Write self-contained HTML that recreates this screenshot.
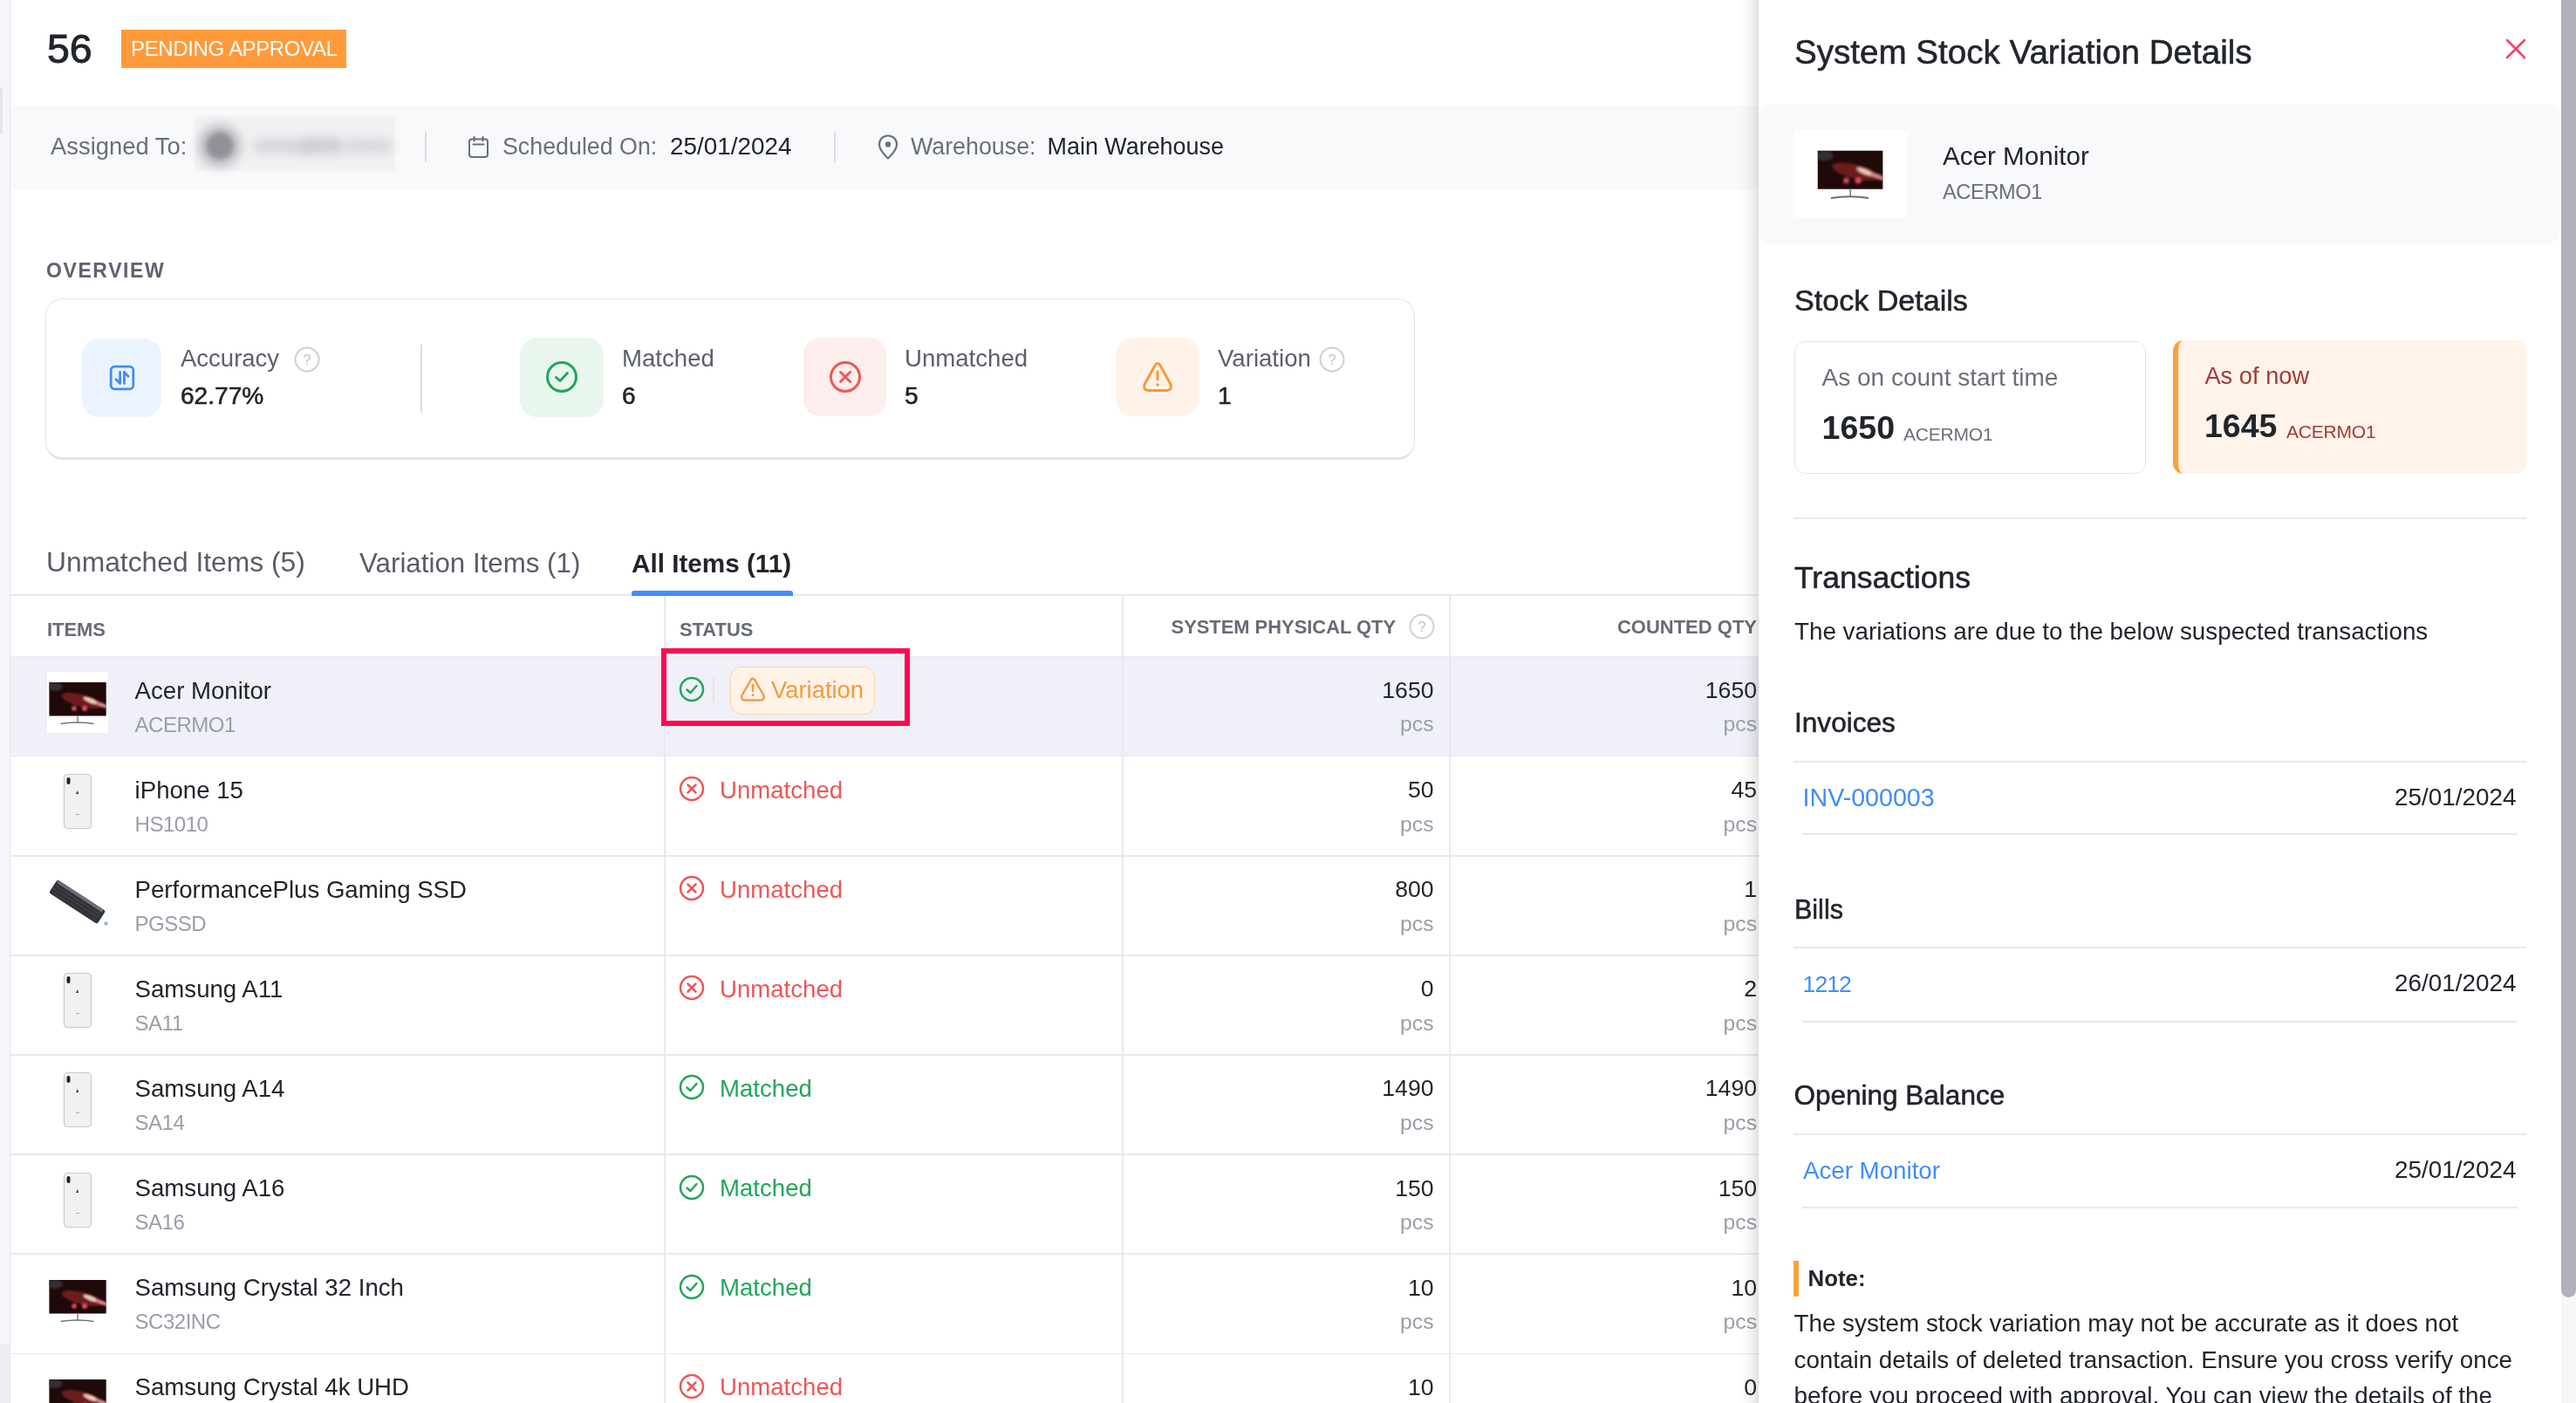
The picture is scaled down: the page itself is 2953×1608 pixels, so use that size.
<!DOCTYPE html>
<html><head><meta charset="utf-8"><title>Stock Count</title>
<style>
html,body{margin:0;padding:0;}
body{width:2953px;height:1608px;overflow:hidden;position:relative;background:#ffffff;font-family:"Liberation Sans",sans-serif;}
.t{position:absolute;line-height:1;white-space:nowrap;}
.b{position:absolute;}
.root{position:absolute;left:0;top:0;width:2953px;height:1608px;will-change:transform;}
</style></head><body>
<div class="root">
<div class="b" style="left:0px;top:0px;width:11px;height:1608px;background:#f5f6fa;"></div>
<div class="b" style="left:0px;top:1541px;width:11px;height:67px;background:#edeef3;"></div>
<div class="b" style="left:11px;top:0px;width:1px;height:1608px;background:#e4e5eb;"></div>
<div class="b" style="left:0px;top:100px;width:3px;height:54px;background:#e4e5ea;border-radius:0 3px 3px 0;"></div>
<div class="t" style="top:32.6px;font-size:46.5px;color:#21252b;left:54px;-webkit-text-stroke:0.9px currentColor;">56</div>
<div class="b" style="left:139px;top:34px;width:258px;height:44px;background:#ff9a3c;"></div>
<div class="t" style="top:44.0px;font-size:24px;color:#ffffff;letter-spacing:-0.35px;left:150px;">PENDING APPROVAL</div>
<div class="b" style="left:12px;top:121px;width:2004px;height:96px;background:#f8f9fb;"></div>
<div class="t" style="top:154.3px;font-size:27.4px;color:#6b6f7a;left:58px;">Assigned To:</div>
<div class="b" style="left:223px;top:133px;width:230px;height:63px;background:#f1f1f3;filter:blur(1.5px);"></div>
<div class="b" style="left:226px;top:141px;width:52px;height:52px;border-radius:50%;background:#c9cacf;filter:blur(5px);"></div>
<div class="b" style="left:236px;top:151px;width:32px;height:32px;border-radius:50%;background:#8f9098;filter:blur(3px);"></div>
<div class="b" style="left:290px;top:160px;width:70px;height:15px;border-radius:8px;background:#d3d4d8;filter:blur(6px);"></div>
<div class="b" style="left:345px;top:158px;width:50px;height:18px;border-radius:9px;background:#cdced2;filter:blur(6px);"></div>
<div class="b" style="left:395px;top:160px;width:55px;height:15px;border-radius:8px;background:#d6d7db;filter:blur(6px);"></div>
<div class="b" style="left:487px;top:151px;width:2px;height:35px;background:#dcdde2;"></div>
<svg class="b" style="left:535px;top:155px" width="28" height="28" viewBox="0 0 28 28"><rect x="3" y="4.5" width="21" height="20.5" rx="3" fill="none" stroke="#6b6f7a" stroke-width="2"/><line x1="8.5" y1="2" x2="8.5" y2="6.5" stroke="#6b6f7a" stroke-width="2" stroke-linecap="round"/><line x1="18.5" y1="2" x2="18.5" y2="6.5" stroke="#6b6f7a" stroke-width="2" stroke-linecap="round"/><line x1="7.5" y1="10.5" x2="19.5" y2="10.5" stroke="#6b6f7a" stroke-width="2" stroke-linecap="round"/></svg>
<div class="t" style="top:154.8px;font-size:26.8px;color:#6b6f7a;left:576px;">Scheduled On:</div>
<div class="t" style="top:153.9px;font-size:27.9px;color:#21252b;left:768px;">25/01/2024</div>
<div class="b" style="left:956px;top:151px;width:2px;height:35px;background:#dcdde2;"></div>
<svg class="b" style="left:1004px;top:154px" width="28" height="30" viewBox="0 0 28 30"><path d="M14 27.5 C14 27.5 4 18.5 4 11.5 C4 5.7 8.5 1.5 14 1.5 C19.5 1.5 24 5.7 24 11.5 C24 18.5 14 27.5 14 27.5 Z" fill="none" stroke="#6b6f7a" stroke-width="2.2" stroke-linejoin="round"/><circle cx="14" cy="11.5" r="3.2" fill="#6b6f7a"/></svg>
<div class="t" style="top:154.8px;font-size:26.8px;color:#6b6f7a;left:1044px;">Warehouse:</div>
<div class="t" style="top:154.7px;font-size:26.9px;color:#21252b;left:1200.6px;">Main Warehouse</div>
<div class="t" style="top:298.5px;font-size:23px;color:#5f636e;font-weight:700;letter-spacing:1.6px;left:53px;">OVERVIEW</div>
<div class="b" style="left:52px;top:342px;width:1570px;height:185px;box-sizing:border-box;border:1.5px solid #e3e4ed;border-bottom:3px solid #e4e3f0;border-radius:20px;background:#fff;"></div>
<div class="b" style="left:94px;top:388px;width:91px;height:90px;background:#ebf3fe;border-radius:20px;"></div>
<svg class="b" style="left:124px;top:417px" width="32" height="32" viewBox="0 0 32 32"><rect x="3.2" y="3.2" width="25.6" height="25.6" rx="4" fill="none" stroke="#3f8cf6" stroke-width="2.8"/><path d="M13.6 9.5 V22.5 M13.6 22.5 L9 17.8" fill="none" stroke="#3f8cf6" stroke-width="2.8" stroke-linecap="round" stroke-linejoin="round"/><path d="M18.4 22.5 V9.5 M18.4 9.5 L23 14.2" fill="none" stroke="#3f8cf6" stroke-width="2.8" stroke-linecap="round" stroke-linejoin="round"/></svg>
<div class="t" style="top:397.4px;font-size:27.5px;color:#5c606b;left:207px;">Accuracy</div>
<svg class="b" style="left:337.0px;top:397.0px" width="30.0" height="30.0" viewBox="0 0 30.0 30.0"><circle cx="15.0" cy="15.0" r="13.5" fill="none" stroke="#cfd0d5" stroke-width="2"/><text x="15.0" y="21.0" text-anchor="middle" font-family="Liberation Sans" font-size="17" fill="#c3c4ca">?</text></svg>
<div class="t" style="top:440.2px;font-size:28.1px;color:#21252b;left:207px;-webkit-text-stroke:0.55px currentColor;">62.77%</div>
<div class="b" style="left:482px;top:395px;width:2px;height:78px;background:#dcdde3;"></div>
<div class="b" style="left:596px;top:387px;width:96px;height:91px;background:#e8f6ee;border-radius:20px;"></div>
<svg class="b" style="left:624px;top:412px" width="40" height="40" viewBox="0 0 40 40"><circle cx="20" cy="20" r="16.5" fill="none" stroke="#22a65b" stroke-width="3"/><path d="M13.5 20.5 L18 24.5 L26.5 15.5" fill="none" stroke="#22a65b" stroke-width="3" stroke-linecap="round" stroke-linejoin="round"/></svg>
<div class="t" style="top:397.3px;font-size:27.6px;color:#5c606b;left:713px;">Matched</div>
<div class="t" style="top:440.2px;font-size:28.1px;color:#21252b;left:713px;-webkit-text-stroke:0.55px currentColor;">6</div>
<div class="b" style="left:921px;top:387px;width:95px;height:90px;background:#fdeded;border-radius:20px;"></div>
<svg class="b" style="left:949px;top:412px" width="40" height="40" viewBox="0 0 40 40"><circle cx="20" cy="20" r="16.5" fill="none" stroke="#ee5757" stroke-width="3"/><path d="M14.5 14.5 L25.5 25.5 M25.5 14.5 L14.5 25.5" fill="none" stroke="#ee5757" stroke-width="3" stroke-linecap="round"/></svg>
<div class="t" style="top:397.3px;font-size:27.6px;color:#5c606b;left:1037px;">Unmatched</div>
<div class="t" style="top:440.2px;font-size:28.1px;color:#21252b;left:1037px;-webkit-text-stroke:0.55px currentColor;">5</div>
<div class="b" style="left:1279px;top:387px;width:96px;height:90px;background:#fff3e9;border-radius:20px;"></div>
<svg class="b" style="left:1307px;top:412px" width="40" height="40" viewBox="0 0 40 40"><path d="M17.2 6.5 Q20 2.5 22.8 6.5 L35 28.5 Q37 34.5 31 35.5 L9 35.5 Q3 34.5 5 28.5 Z" fill="none" stroke="#f7993a" stroke-width="3" stroke-linejoin="round"/><line x1="20" y1="14" x2="20" y2="23" stroke="#f7993a" stroke-width="3" stroke-linecap="round"/><circle cx="20" cy="29" r="1.8" fill="#f7993a"/></svg>
<div class="t" style="top:397.3px;font-size:27.6px;color:#5c606b;left:1396px;">Variation</div>
<svg class="b" style="left:1512.0px;top:397.0px" width="30.0" height="30.0" viewBox="0 0 30.0 30.0"><circle cx="15.0" cy="15.0" r="13.5" fill="none" stroke="#cfd0d5" stroke-width="2"/><text x="15.0" y="21.0" text-anchor="middle" font-family="Liberation Sans" font-size="17" fill="#c3c4ca">?</text></svg>
<div class="t" style="top:440.2px;font-size:28.1px;color:#21252b;left:1396px;-webkit-text-stroke:0.55px currentColor;">1</div>
<div class="t" style="top:629.1px;font-size:31.8px;color:#585c68;left:53px;">Unmatched Items (5)</div>
<div class="t" style="top:629.5px;font-size:31.3px;color:#585c68;left:412px;">Variation Items (1)</div>
<div class="t" style="top:630.9px;font-size:29.7px;color:#21252b;font-weight:700;left:724px;">All Items (11)</div>
<div class="b" style="left:12px;top:681px;width:2004px;height:2px;background:#e7e8f0;"></div>
<div class="b" style="left:724px;top:677px;width:185px;height:6px;background:#408dfb;border-radius:3px 3px 0 0;"></div>
<div class="t" style="top:710.5px;font-size:21.9px;color:#676b76;font-weight:700;left:54px;">ITEMS</div>
<div class="t" style="top:710.5px;font-size:21.9px;color:#676b76;font-weight:700;left:779px;">STATUS</div>
<div class="t" style="top:708.0px;font-size:21.9px;color:#676b76;font-weight:700;right:1353px;">SYSTEM PHYSICAL QTY</div>
<svg class="b" style="left:1615.0px;top:703.0px" width="30.0" height="30.0" viewBox="0 0 30.0 30.0"><circle cx="15.0" cy="15.0" r="13.5" fill="none" stroke="#cfd0d5" stroke-width="2"/><text x="15.0" y="21.0" text-anchor="middle" font-family="Liberation Sans" font-size="17" fill="#c3c4ca">?</text></svg>
<div class="t" style="top:708.4px;font-size:22px;color:#676b76;font-weight:700;right:939px;">COUNTED QTY</div>
<div class="b" style="left:12px;top:752.5px;width:2004px;height:114.0px;background:#eff0f8;"></div>
<div class="b" style="left:12px;top:751.8px;width:2004px;height:1.5px;background:#e8e9f0;"></div>
<div class="b" style="left:12px;top:865.9px;width:2004px;height:1.5px;background:#e8e9f0;"></div>
<div class="b" style="left:12px;top:980.0px;width:2004px;height:1.5px;background:#e8e9f0;"></div>
<div class="b" style="left:12px;top:1094.1px;width:2004px;height:1.5px;background:#e8e9f0;"></div>
<div class="b" style="left:12px;top:1208.2px;width:2004px;height:1.5px;background:#e8e9f0;"></div>
<div class="b" style="left:12px;top:1322.3px;width:2004px;height:1.5px;background:#e8e9f0;"></div>
<div class="b" style="left:12px;top:1436.4px;width:2004px;height:1.5px;background:#e8e9f0;"></div>
<div class="b" style="left:12px;top:1550.5px;width:2004px;height:1.5px;background:#e8e9f0;"></div>
<div class="b" style="left:761px;top:683px;width:1.5px;height:925px;background:#e8e9f0;"></div>
<div class="b" style="left:1286px;top:683px;width:1.5px;height:925px;background:#e8e9f0;"></div>
<div class="b" style="left:1661px;top:683px;width:1.5px;height:925px;background:#e8e9f0;"></div>
<svg class="b" style="left:54px;top:770.0px" width="70" height="70" viewBox="0 0 70 70" preserveAspectRatio="none"><rect width="70" height="70" fill="#ffffff"/><defs><filter id="fm54_770" x="-20%" y="-50%" width="140%" height="200%"><feGaussianBlur stdDeviation="1.3"/></filter><clipPath id="cm54_770"><rect x="2.4" y="12" width="65.3" height="38.5"/></clipPath></defs><rect x="2.4" y="12" width="65.3" height="38.5" fill="#1f0909"/><g clip-path="url(#cm54_770)"><g filter="url(#fm54_770)"><ellipse cx="9" cy="17" rx="9" ry="5" fill="#3a3e47" opacity="0.7"/><ellipse cx="40" cy="33" rx="24" ry="7" transform="rotate(14 40 33)" fill="#7a2222" opacity="0.85"/><ellipse cx="50" cy="33" rx="9" ry="2.6" transform="rotate(22 50 33)" fill="#f3c8b8"/><ellipse cx="63" cy="38" rx="8" ry="2.2" transform="rotate(22 63 38)" fill="#d88c8c"/><circle cx="31" cy="42" r="2.8" fill="#e0506a"/><circle cx="43" cy="42" r="3" fill="#ea4a6a"/></g></g><rect x="34.3" y="50.5" width="1.6" height="8" fill="#8a8c92"/><path d="M15.7 59.5 Q35 56.5 53.4 59.5" fill="none" stroke="#6b6d73" stroke-width="1.6"/></svg>
<div class="t" style="top:777.6px;font-size:27.6px;color:#21252b;left:154.6px;">Acer Monitor</div>
<div class="t" style="top:818.7px;font-size:24px;color:#9a9ea9;letter-spacing:-0.5px;left:154.6px;">ACERMO1</div>
<svg class="b" style="left:778.0px;top:775.0px" width="30" height="30" viewBox="0 0 30 30"><circle cx="15.0" cy="15.0" r="13" fill="none" stroke="#22a65b" stroke-width="2.5"/><path d="M9.5 15.5 L13.5 19.0 L20.5 11.0" fill="none" stroke="#22a65b" stroke-width="2.5" stroke-linecap="round" stroke-linejoin="round"/></svg>
<div class="b" style="left:817px;top:775.0px;width:1.5px;height:30.0px;background:#e6e4e0;"></div>
<div class="b" style="left:837px;top:763.5px;width:166px;height:55px;box-sizing:border-box;border:1.5px solid #fed3a6;border-radius:13px;background:#fff3e8;"></div>
<svg class="b" style="left:847px;top:775.0px" width="32" height="30" viewBox="0 0 32 30"><path d="M13.6 4.5 Q16 1 18.4 4.5 L28.5 22 Q30 27 25 27.5 L7 27.5 Q2 27 3.5 22 Z" fill="none" stroke="#f7993a" stroke-width="2.5" stroke-linejoin="round"/><line x1="16" y1="10" x2="16" y2="17" stroke="#f7993a" stroke-width="2.5" stroke-linecap="round"/><circle cx="16" cy="21.5" r="1.5" fill="#f7993a"/></svg>
<div class="t" style="top:777.3px;font-size:27.4px;color:#f7993a;left:884px;">Variation</div>
<div class="t" style="top:778.0px;font-size:26.6px;color:#21252b;right:1309.5px;">1650</div>
<div class="t" style="top:818.4px;font-size:24.7px;color:#9a9ea9;right:1309.5px;">pcs</div>
<div class="t" style="top:778.0px;font-size:26.6px;color:#21252b;right:939px;">1650</div>
<div class="t" style="top:818.4px;font-size:24.7px;color:#9a9ea9;right:939px;">pcs</div>
<svg class="b" style="left:54px;top:884.1px" width="70" height="70" viewBox="0 0 70 70"><rect x="19.5" y="3.5" width="31" height="62" rx="4" fill="#f1f1f3" stroke="#c9cacd" stroke-width="1.2"/><rect x="22.5" y="7" width="4" height="8" rx="2" fill="#222"/><path d="M35 22 l-2 4 h3 z" fill="#333"/><rect x="33" y="49" width="4" height="1" fill="#aaa"/></svg>
<div class="t" style="top:891.7px;font-size:27.6px;color:#21252b;left:154.6px;">iPhone 15</div>
<div class="t" style="top:932.8px;font-size:24px;color:#9a9ea9;letter-spacing:-0.5px;left:154.6px;">HS1010</div>
<svg class="b" style="left:778.0px;top:889.1px" width="30" height="30" viewBox="0 0 30 30"><circle cx="15.0" cy="15.0" r="13" fill="none" stroke="#ee5757" stroke-width="2.5"/><path d="M10.5 10.5 L19.5 19.5 M19.5 10.5 L10.5 19.5" fill="none" stroke="#ee5757" stroke-width="2.5" stroke-linecap="round"/></svg>
<div class="t" style="top:891.7px;font-size:27.6px;color:#ee5757;left:825px;">Unmatched</div>
<div class="t" style="top:892.1px;font-size:26.6px;color:#21252b;right:1309.5px;">50</div>
<div class="t" style="top:932.5px;font-size:24.7px;color:#9a9ea9;right:1309.5px;">pcs</div>
<div class="t" style="top:892.1px;font-size:26.6px;color:#21252b;right:939px;">45</div>
<div class="t" style="top:932.5px;font-size:24.7px;color:#9a9ea9;right:939px;">pcs</div>
<svg class="b" style="left:54px;top:998.2px" width="70" height="70" viewBox="0 0 70 70"><g transform="rotate(33 34.6 35.6)"><rect x="1.6" y="26.6" width="66" height="18" rx="2.5" fill="#2f3136"/><rect x="3" y="26.8" width="62" height="3.5" rx="1.5" fill="#6b6e76"/><rect x="3" y="33" width="62" height="1.2" fill="#44474d"/><rect x="3" y="37" width="62" height="1.2" fill="#44474d"/><rect x="3" y="41" width="62" height="1.2" fill="#3d4046"/></g><circle cx="67.5" cy="60.5" r="2.2" fill="#8fb0e0"/></svg>
<div class="t" style="top:1005.8px;font-size:27.6px;color:#21252b;left:154.6px;">PerformancePlus Gaming SSD</div>
<div class="t" style="top:1046.9px;font-size:24px;color:#9a9ea9;letter-spacing:-0.5px;left:154.6px;">PGSSD</div>
<svg class="b" style="left:778.0px;top:1003.2px" width="30" height="30" viewBox="0 0 30 30"><circle cx="15.0" cy="15.0" r="13" fill="none" stroke="#ee5757" stroke-width="2.5"/><path d="M10.5 10.5 L19.5 19.5 M19.5 10.5 L10.5 19.5" fill="none" stroke="#ee5757" stroke-width="2.5" stroke-linecap="round"/></svg>
<div class="t" style="top:1005.8px;font-size:27.6px;color:#ee5757;left:825px;">Unmatched</div>
<div class="t" style="top:1006.2px;font-size:26.6px;color:#21252b;right:1309.5px;">800</div>
<div class="t" style="top:1046.6px;font-size:24.7px;color:#9a9ea9;right:1309.5px;">pcs</div>
<div class="t" style="top:1006.2px;font-size:26.6px;color:#21252b;right:939px;">1</div>
<div class="t" style="top:1046.6px;font-size:24.7px;color:#9a9ea9;right:939px;">pcs</div>
<svg class="b" style="left:54px;top:1112.3px" width="70" height="70" viewBox="0 0 70 70"><rect x="19.5" y="3.5" width="31" height="62" rx="4" fill="#f1f1f3" stroke="#c9cacd" stroke-width="1.2"/><rect x="22.5" y="7" width="4" height="8" rx="2" fill="#222"/><path d="M35 22 l-2 4 h3 z" fill="#333"/><rect x="33" y="49" width="4" height="1" fill="#aaa"/></svg>
<div class="t" style="top:1119.9px;font-size:27.6px;color:#21252b;left:154.6px;">Samsung A11</div>
<div class="t" style="top:1161.0px;font-size:24px;color:#9a9ea9;letter-spacing:-0.5px;left:154.6px;">SA11</div>
<svg class="b" style="left:778.0px;top:1117.3px" width="30" height="30" viewBox="0 0 30 30"><circle cx="15.0" cy="15.0" r="13" fill="none" stroke="#ee5757" stroke-width="2.5"/><path d="M10.5 10.5 L19.5 19.5 M19.5 10.5 L10.5 19.5" fill="none" stroke="#ee5757" stroke-width="2.5" stroke-linecap="round"/></svg>
<div class="t" style="top:1119.9px;font-size:27.6px;color:#ee5757;left:825px;">Unmatched</div>
<div class="t" style="top:1120.3px;font-size:26.6px;color:#21252b;right:1309.5px;">0</div>
<div class="t" style="top:1160.7px;font-size:24.7px;color:#9a9ea9;right:1309.5px;">pcs</div>
<div class="t" style="top:1120.3px;font-size:26.6px;color:#21252b;right:939px;">2</div>
<div class="t" style="top:1160.7px;font-size:24.7px;color:#9a9ea9;right:939px;">pcs</div>
<svg class="b" style="left:54px;top:1226.4px" width="70" height="70" viewBox="0 0 70 70"><rect x="19.5" y="3.5" width="31" height="62" rx="4" fill="#f1f1f3" stroke="#c9cacd" stroke-width="1.2"/><rect x="22.5" y="7" width="4" height="8" rx="2" fill="#222"/><path d="M35 22 l-2 4 h3 z" fill="#333"/><rect x="33" y="49" width="4" height="1" fill="#aaa"/></svg>
<div class="t" style="top:1234.0px;font-size:27.6px;color:#21252b;left:154.6px;">Samsung A14</div>
<div class="t" style="top:1275.1px;font-size:24px;color:#9a9ea9;letter-spacing:-0.5px;left:154.6px;">SA14</div>
<svg class="b" style="left:778.0px;top:1231.4px" width="30" height="30" viewBox="0 0 30 30"><circle cx="15.0" cy="15.0" r="13" fill="none" stroke="#22a65b" stroke-width="2.5"/><path d="M9.5 15.5 L13.5 19.0 L20.5 11.0" fill="none" stroke="#22a65b" stroke-width="2.5" stroke-linecap="round" stroke-linejoin="round"/></svg>
<div class="t" style="top:1234.0px;font-size:27.6px;color:#22a65b;left:825px;">Matched</div>
<div class="t" style="top:1234.4px;font-size:26.6px;color:#21252b;right:1309.5px;">1490</div>
<div class="t" style="top:1274.8px;font-size:24.7px;color:#9a9ea9;right:1309.5px;">pcs</div>
<div class="t" style="top:1234.4px;font-size:26.6px;color:#21252b;right:939px;">1490</div>
<div class="t" style="top:1274.8px;font-size:24.7px;color:#9a9ea9;right:939px;">pcs</div>
<svg class="b" style="left:54px;top:1340.5px" width="70" height="70" viewBox="0 0 70 70"><rect x="19.5" y="3.5" width="31" height="62" rx="4" fill="#f1f1f3" stroke="#c9cacd" stroke-width="1.2"/><rect x="22.5" y="7" width="4" height="8" rx="2" fill="#222"/><path d="M35 22 l-2 4 h3 z" fill="#333"/><rect x="33" y="49" width="4" height="1" fill="#aaa"/></svg>
<div class="t" style="top:1348.1px;font-size:27.6px;color:#21252b;left:154.6px;">Samsung A16</div>
<div class="t" style="top:1389.2px;font-size:24px;color:#9a9ea9;letter-spacing:-0.5px;left:154.6px;">SA16</div>
<svg class="b" style="left:778.0px;top:1345.5px" width="30" height="30" viewBox="0 0 30 30"><circle cx="15.0" cy="15.0" r="13" fill="none" stroke="#22a65b" stroke-width="2.5"/><path d="M9.5 15.5 L13.5 19.0 L20.5 11.0" fill="none" stroke="#22a65b" stroke-width="2.5" stroke-linecap="round" stroke-linejoin="round"/></svg>
<div class="t" style="top:1348.1px;font-size:27.6px;color:#22a65b;left:825px;">Matched</div>
<div class="t" style="top:1348.5px;font-size:26.6px;color:#21252b;right:1309.5px;">150</div>
<div class="t" style="top:1388.9px;font-size:24.7px;color:#9a9ea9;right:1309.5px;">pcs</div>
<div class="t" style="top:1348.5px;font-size:26.6px;color:#21252b;right:939px;">150</div>
<div class="t" style="top:1388.9px;font-size:24.7px;color:#9a9ea9;right:939px;">pcs</div>
<svg class="b" style="left:54px;top:1454.6px" width="70" height="70" viewBox="0 0 70 70" preserveAspectRatio="none"><rect width="70" height="70" fill="#ffffff"/><defs><filter id="fm54_1454" x="-20%" y="-50%" width="140%" height="200%"><feGaussianBlur stdDeviation="1.3"/></filter><clipPath id="cm54_1454"><rect x="2.4" y="12" width="65.3" height="38.5"/></clipPath></defs><rect x="2.4" y="12" width="65.3" height="38.5" fill="#1f0909"/><g clip-path="url(#cm54_1454)"><g filter="url(#fm54_1454)"><ellipse cx="9" cy="17" rx="9" ry="5" fill="#3a3e47" opacity="0.7"/><ellipse cx="40" cy="33" rx="24" ry="7" transform="rotate(14 40 33)" fill="#7a2222" opacity="0.85"/><ellipse cx="50" cy="33" rx="9" ry="2.6" transform="rotate(22 50 33)" fill="#f3c8b8"/><ellipse cx="63" cy="38" rx="8" ry="2.2" transform="rotate(22 63 38)" fill="#d88c8c"/><circle cx="31" cy="42" r="2.8" fill="#e0506a"/><circle cx="43" cy="42" r="3" fill="#ea4a6a"/></g></g><rect x="34.3" y="50.5" width="1.6" height="8" fill="#8a8c92"/><path d="M15.7 59.5 Q35 56.5 53.4 59.5" fill="none" stroke="#6b6d73" stroke-width="1.6"/></svg>
<div class="t" style="top:1462.2px;font-size:27.6px;color:#21252b;left:154.6px;">Samsung Crystal 32 Inch</div>
<div class="t" style="top:1503.3px;font-size:24px;color:#9a9ea9;letter-spacing:-0.5px;left:154.6px;">SC32INC</div>
<svg class="b" style="left:778.0px;top:1459.6px" width="30" height="30" viewBox="0 0 30 30"><circle cx="15.0" cy="15.0" r="13" fill="none" stroke="#22a65b" stroke-width="2.5"/><path d="M9.5 15.5 L13.5 19.0 L20.5 11.0" fill="none" stroke="#22a65b" stroke-width="2.5" stroke-linecap="round" stroke-linejoin="round"/></svg>
<div class="t" style="top:1462.2px;font-size:27.6px;color:#22a65b;left:825px;">Matched</div>
<div class="t" style="top:1462.6px;font-size:26.6px;color:#21252b;right:1309.5px;">10</div>
<div class="t" style="top:1503.0px;font-size:24.7px;color:#9a9ea9;right:1309.5px;">pcs</div>
<div class="t" style="top:1462.6px;font-size:26.6px;color:#21252b;right:939px;">10</div>
<div class="t" style="top:1503.0px;font-size:24.7px;color:#9a9ea9;right:939px;">pcs</div>
<svg class="b" style="left:54px;top:1568.7px" width="70" height="70" viewBox="0 0 70 70" preserveAspectRatio="none"><rect width="70" height="70" fill="#ffffff"/><defs><filter id="fm54_1568" x="-20%" y="-50%" width="140%" height="200%"><feGaussianBlur stdDeviation="1.3"/></filter><clipPath id="cm54_1568"><rect x="2.4" y="12" width="65.3" height="38.5"/></clipPath></defs><rect x="2.4" y="12" width="65.3" height="38.5" fill="#1f0909"/><g clip-path="url(#cm54_1568)"><g filter="url(#fm54_1568)"><ellipse cx="9" cy="17" rx="9" ry="5" fill="#3a3e47" opacity="0.7"/><ellipse cx="40" cy="33" rx="24" ry="7" transform="rotate(14 40 33)" fill="#7a2222" opacity="0.85"/><ellipse cx="50" cy="33" rx="9" ry="2.6" transform="rotate(22 50 33)" fill="#f3c8b8"/><ellipse cx="63" cy="38" rx="8" ry="2.2" transform="rotate(22 63 38)" fill="#d88c8c"/><circle cx="31" cy="42" r="2.8" fill="#e0506a"/><circle cx="43" cy="42" r="3" fill="#ea4a6a"/></g></g><rect x="34.3" y="50.5" width="1.6" height="8" fill="#8a8c92"/><path d="M15.7 59.5 Q35 56.5 53.4 59.5" fill="none" stroke="#6b6d73" stroke-width="1.6"/></svg>
<div class="t" style="top:1576.3px;font-size:27.6px;color:#21252b;left:154.6px;">Samsung Crystal 4k UHD</div>
<div class="t" style="top:1617.4px;font-size:24px;color:#9a9ea9;letter-spacing:-0.5px;left:154.6px;">SC4KUHD</div>
<svg class="b" style="left:778.0px;top:1573.7px" width="30" height="30" viewBox="0 0 30 30"><circle cx="15.0" cy="15.0" r="13" fill="none" stroke="#ee5757" stroke-width="2.5"/><path d="M10.5 10.5 L19.5 19.5 M19.5 10.5 L10.5 19.5" fill="none" stroke="#ee5757" stroke-width="2.5" stroke-linecap="round"/></svg>
<div class="t" style="top:1576.3px;font-size:27.6px;color:#ee5757;left:825px;">Unmatched</div>
<div class="t" style="top:1576.7px;font-size:26.6px;color:#21252b;right:1309.5px;">10</div>
<div class="t" style="top:1617.1px;font-size:24.7px;color:#9a9ea9;right:1309.5px;">pcs</div>
<div class="t" style="top:1576.7px;font-size:26.6px;color:#21252b;right:939px;">0</div>
<div class="t" style="top:1617.1px;font-size:24.7px;color:#9a9ea9;right:939px;">pcs</div>
<div class="b" style="left:758px;top:743px;width:285px;height:89px;box-sizing:border-box;border:6px solid #ff0a4d;"></div>
<div class="b" style="left:1994px;top:0;width:22px;height:1608px;background:linear-gradient(to right, rgba(0,0,0,0) 0%, rgba(0,0,0,0.025) 40%, rgba(0,0,0,0.07) 75%, rgba(0,0,0,0.12) 100%);"></div>
<div class="b" style="left:2016px;top:0;width:937px;height:1608px;background:#fff;"></div>
<div class="b" style="left:2936px;top:0px;width:17px;height:1608px;background:#f7f7fa;"></div>
<div class="b" style="left:2936px;top:0px;width:17px;height:1487px;background:#b0b0bb;border-radius:0 0 8.5px 8.5px;"></div>
<div class="t" style="top:40.5px;font-size:38.6px;color:#21252b;left:2057px;-webkit-text-stroke:0.55px currentColor;">System Stock Variation Details</div>
<svg class="b" style="left:2870px;top:42px" width="28" height="28" viewBox="0 0 28 28"><path d="M4 4 L24 24 M24 4 L4 24" stroke="#f4436a" stroke-width="2.6" stroke-linecap="round"/></svg>
<div class="b" style="left:2016px;top:119px;width:918px;height:160px;background:#f8f9fb;border-radius:14px;"></div>
<div class="b" style="left:2056px;top:150px;width:130px;height:99px;background:#ffffff;"></div>
<svg class="b" style="left:2081px;top:159px" width="80" height="80" viewBox="0 0 70 70" preserveAspectRatio="none"><rect width="70" height="70" fill="#ffffff"/><defs><filter id="fm2081_159" x="-20%" y="-50%" width="140%" height="200%"><feGaussianBlur stdDeviation="1.3"/></filter><clipPath id="cm2081_159"><rect x="2.4" y="12" width="65.3" height="38.5"/></clipPath></defs><rect x="2.4" y="12" width="65.3" height="38.5" fill="#1f0909"/><g clip-path="url(#cm2081_159)"><g filter="url(#fm2081_159)"><ellipse cx="9" cy="17" rx="9" ry="5" fill="#3a3e47" opacity="0.7"/><ellipse cx="40" cy="33" rx="24" ry="7" transform="rotate(14 40 33)" fill="#7a2222" opacity="0.85"/><ellipse cx="50" cy="33" rx="9" ry="2.6" transform="rotate(22 50 33)" fill="#f3c8b8"/><ellipse cx="63" cy="38" rx="8" ry="2.2" transform="rotate(22 63 38)" fill="#d88c8c"/><circle cx="31" cy="42" r="2.8" fill="#e0506a"/><circle cx="43" cy="42" r="3" fill="#ea4a6a"/></g></g><rect x="34.3" y="50.5" width="1.6" height="8" fill="#8a8c92"/><path d="M15.7 59.5 Q35 56.5 53.4 59.5" fill="none" stroke="#6b6d73" stroke-width="1.6"/></svg>
<div class="t" style="top:164.2px;font-size:29.6px;color:#21252b;left:2227px;">Acer Monitor</div>
<div class="t" style="top:209.1px;font-size:23.5px;color:#6b6f7a;letter-spacing:-0.3px;left:2227px;">ACERMO1</div>
<div class="t" style="top:327.1px;font-size:34.1px;color:#21252b;left:2057px;-webkit-text-stroke:0.55px currentColor;">Stock Details</div>
<div class="b" style="left:2057px;top:391px;width:403px;height:152px;box-sizing:border-box;border:1.5px solid #e4e5ea;border-radius:12px;"></div>
<div class="t" style="top:418.8px;font-size:28px;color:#6b6f7a;left:2088.6px;">As on count start time</div>
<div class="t" style="top:472.3px;font-size:37.5px;color:#21252b;font-weight:700;left:2088.6px;">1650</div>
<div class="t" style="top:487.2px;font-size:21px;color:#6b6f7a;letter-spacing:-0.2px;left:2182px;">ACERMO1</div>
<div class="b" style="left:2491px;top:390px;width:405px;height:153px;box-sizing:border-box;border-left:6px solid #ff9f3a;border-radius:12px;background:#fff3ea;"></div>
<div class="t" style="top:416.6px;font-size:27.3px;color:#a23b37;left:2527.4px;">As of now</div>
<div class="t" style="top:470.3px;font-size:37.5px;color:#21252b;font-weight:700;left:2527px;">1645</div>
<div class="t" style="top:484.2px;font-size:21px;color:#a23b37;letter-spacing:-0.2px;left:2621px;">ACERMO1</div>
<div class="b" style="left:2056px;top:593px;width:840px;height:2px;background:#e7e8ee;"></div>
<div class="t" style="top:645.4px;font-size:35.5px;color:#21252b;left:2057px;-webkit-text-stroke:0.55px currentColor;">Transactions</div>
<div class="t" style="top:709.5px;font-size:27.8px;color:#21252b;left:2057px;">The variations are due to the below suspected transactions</div>
<div class="t" style="top:813.3px;font-size:31.6px;color:#21252b;left:2057px;-webkit-text-stroke:0.55px currentColor;">Invoices</div>
<div class="b" style="left:2056px;top:872px;width:840px;height:2px;background:#e7e8f0;"></div>
<div class="t" style="top:899.5px;font-size:28.6px;color:#408dfb;left:2066.6px;">INV-000003</div>
<div class="t" style="top:900.1px;font-size:27.9px;color:#21252b;right:68.5px;">25/01/2024</div>
<div class="b" style="left:2066px;top:955px;width:820px;height:2px;background:#e7e8f0;"></div>
<div class="t" style="top:1026.9px;font-size:30.5px;color:#21252b;left:2057px;-webkit-text-stroke:0.55px currentColor;">Bills</div>
<div class="b" style="left:2056px;top:1085px;width:840px;height:2px;background:#e7e8f0;"></div>
<div class="t" style="top:1114.6px;font-size:26.5px;color:#408dfb;letter-spacing:-0.9px;left:2066.6px;">1212</div>
<div class="t" style="top:1113.4px;font-size:27.9px;color:#21252b;right:68.5px;">26/01/2024</div>
<div class="b" style="left:2066px;top:1169.5px;width:820px;height:2.0px;background:#e7e8f0;"></div>
<div class="t" style="top:1239.6px;font-size:31.5px;color:#21252b;left:2056.5px;-webkit-text-stroke:0.55px currentColor;">Opening Balance</div>
<div class="b" style="left:2056px;top:1299px;width:840px;height:2px;background:#e7e8f0;"></div>
<div class="t" style="top:1327.6px;font-size:27.7px;color:#408dfb;left:2067px;">Acer Monitor</div>
<div class="t" style="top:1327.4px;font-size:27.9px;color:#21252b;right:68.5px;">25/01/2024</div>
<div class="b" style="left:2066px;top:1383px;width:820px;height:2px;background:#e7e8f0;"></div>
<div class="b" style="left:2056px;top:1445px;width:6px;height:41px;background:#ffa13a;"></div>
<div class="t" style="top:1453.2px;font-size:25.8px;color:#21252b;font-weight:700;left:2072.6px;">Note:</div>
<div class="t" style="top:1503.2px;font-size:27.8px;color:#21252b;left:2056.5px;">The system stock variation may not be accurate as it does not</div>
<div class="t" style="top:1544.7px;font-size:27.8px;color:#21252b;left:2056.5px;">contain details of deleted transaction. Ensure you cross verify once</div>
<div class="t" style="top:1586.2px;font-size:27.8px;color:#21252b;left:2056.5px;">before you proceed with approval. You can view the details of the</div>
</div>
</body></html>
